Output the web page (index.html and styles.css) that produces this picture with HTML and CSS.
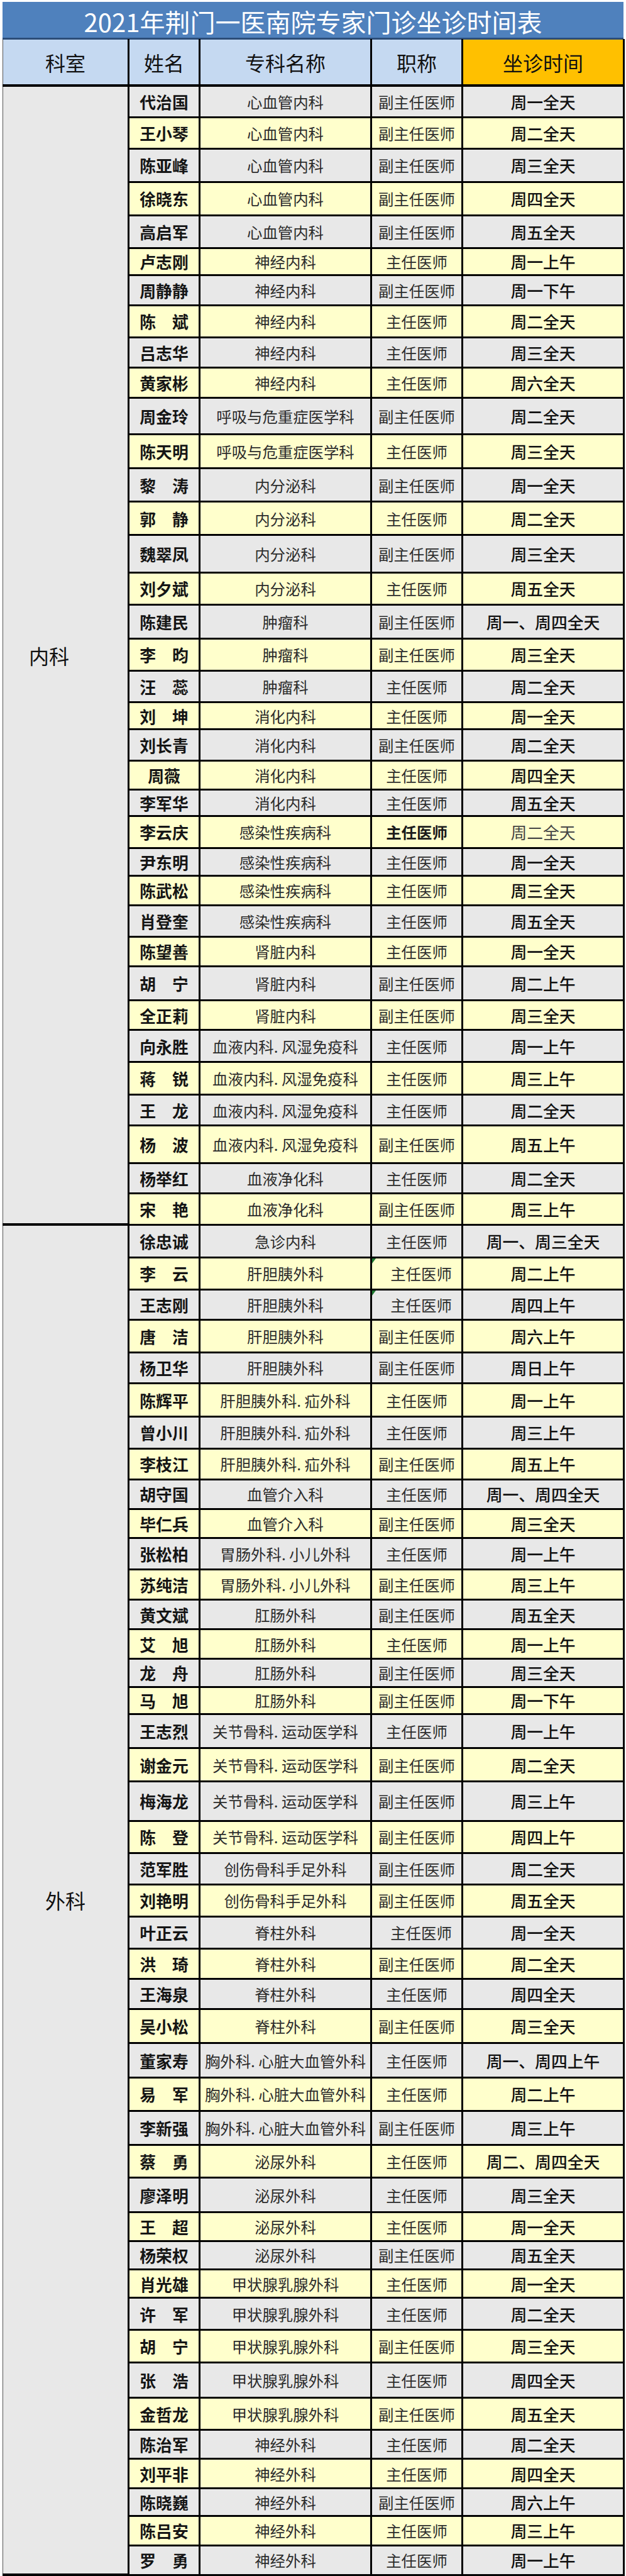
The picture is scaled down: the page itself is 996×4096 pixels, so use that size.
FILE: index.html
```html
<!DOCTYPE html>
<html lang="zh-CN">
<head>
<meta charset="utf-8">
<title>2021年荆门一医南院专家门诊坐诊时间表</title>
<link rel="stylesheet" href="styles.css">
</head>
<body>
<div class="sheet">
  <div class="title">2021年荆门一医南院专家门诊坐诊时间表</div>
  <table class="schedule">
    <colgroup>
      <col class="c-dept"><col class="c-name"><col class="c-spec"><col class="c-rank"><col class="c-time">
    </colgroup>
    <thead>
      <tr><th class="th-first">科室</th><th>姓名</th><th>专科名称</th><th>职称</th><th class="th-time">坐诊时间</th></tr>
    </thead>
    <tbody>
      <tr class="h55"><td class="dept dept-nei" rowspan="36">内科</td><td class="name">代治国</td><td class="spec">心血管内科</td><td class="rank">副主任医师</td><td class="time">周一全天</td></tr>
      <tr class="h54"><td class="name">王小琴</td><td class="spec">心血管内科</td><td class="rank">副主任医师</td><td class="time">周二全天</td></tr>
      <tr class="h57"><td class="name">陈亚峰</td><td class="spec">心血管内科</td><td class="rank">副主任医师</td><td class="time">周三全天</td></tr>
      <tr class="h58"><td class="name">徐晓东</td><td class="spec">心血管内科</td><td class="rank">副主任医师</td><td class="time">周四全天</td></tr>
      <tr class="h56"><td class="name">高启军</td><td class="spec">心血管内科</td><td class="rank">副主任医师</td><td class="time">周五全天</td></tr>
      <tr class="h47"><td class="name">卢志刚</td><td class="spec">神经内科</td><td class="rank">主任医师</td><td class="time">周一上午</td></tr>
      <tr class="h52"><td class="name">周静静</td><td class="spec">神经内科</td><td class="rank">副主任医师</td><td class="time">周一下午</td></tr>
      <tr class="h55"><td class="name">陈　斌</td><td class="spec">神经内科</td><td class="rank">主任医师</td><td class="time">周二全天</td></tr>
      <tr class="h53"><td class="name">吕志华</td><td class="spec">神经内科</td><td class="rank">主任医师</td><td class="time">周三全天</td></tr>
      <tr class="h52"><td class="name">黄家彬</td><td class="spec">神经内科</td><td class="rank">主任医师</td><td class="time">周六全天</td></tr>
      <tr class="h62"><td class="name">周金玲</td><td class="spec">呼吸与危重症医学科</td><td class="rank">副主任医师</td><td class="time">周二全天</td></tr>
      <tr class="h59"><td class="name">陈天明</td><td class="spec">呼吸与危重症医学科</td><td class="rank">主任医师</td><td class="time">周三全天</td></tr>
      <tr class="h58"><td class="name">黎　涛</td><td class="spec">内分泌科</td><td class="rank">副主任医师</td><td class="time">周一全天</td></tr>
      <tr class="h57"><td class="name">郭　静</td><td class="spec">内分泌科</td><td class="rank">主任医师</td><td class="time">周二全天</td></tr>
      <tr class="h65"><td class="name">魏翠凤</td><td class="spec">内分泌科</td><td class="rank">副主任医师</td><td class="time">周三全天</td></tr>
      <tr class="h55"><td class="name">刘夕斌</td><td class="spec">内分泌科</td><td class="rank">主任医师</td><td class="time">周五全天</td></tr>
      <tr class="h59"><td class="name">陈建民</td><td class="spec">肿瘤科</td><td class="rank">副主任医师</td><td class="time">周一、周四全天</td></tr>
      <tr class="h55"><td class="name">李　昀</td><td class="spec">肿瘤科</td><td class="rank">副主任医师</td><td class="time">周三全天</td></tr>
      <tr class="h55"><td class="name">汪　蕊</td><td class="spec">肿瘤科</td><td class="rank">主任医师</td><td class="time">周二全天</td></tr>
      <tr class="h46"><td class="name">刘　坤</td><td class="spec">消化内科</td><td class="rank">主任医师</td><td class="time">周一全天</td></tr>
      <tr class="h55"><td class="name">刘长青</td><td class="spec">消化内科</td><td class="rank">副主任医师</td><td class="time">周二全天</td></tr>
      <tr class="h49"><td class="name">周薇</td><td class="spec">消化内科</td><td class="rank">主任医师</td><td class="time">周四全天</td></tr>
      <tr class="h46"><td class="name">李军华</td><td class="spec">消化内科</td><td class="rank">主任医师</td><td class="time">周五全天</td></tr>
      <tr class="h55"><td class="name">李云庆</td><td class="spec">感染性疾病科</td><td class="rank strong">主任医师</td><td class="time light">周二全天</td></tr>
      <tr class="h48"><td class="name">尹东明</td><td class="spec">感染性疾病科</td><td class="rank">主任医师</td><td class="time">周一全天</td></tr>
      <tr class="h51"><td class="name">陈武松</td><td class="spec">感染性疾病科</td><td class="rank">主任医师</td><td class="time">周三全天</td></tr>
      <tr class="h54"><td class="name">肖登奎</td><td class="spec">感染性疾病科</td><td class="rank">主任医师</td><td class="time">周五全天</td></tr>
      <tr class="h51"><td class="name">陈望善</td><td class="spec">肾脏内科</td><td class="rank">主任医师</td><td class="time">周一全天</td></tr>
      <tr class="h59"><td class="name">胡　宁</td><td class="spec">肾脏内科</td><td class="rank">副主任医师</td><td class="time">周二上午</td></tr>
      <tr class="h51"><td class="name">全正莉</td><td class="spec">肾脏内科</td><td class="rank">副主任医师</td><td class="time">周三全天</td></tr>
      <tr class="h55"><td class="name">向永胜</td><td class="spec">血液内科. 风湿免疫科</td><td class="rank">主任医师</td><td class="time">周一上午</td></tr>
      <tr class="h57"><td class="name">蒋　锐</td><td class="spec">血液内科. 风湿免疫科</td><td class="rank">主任医师</td><td class="time">周三上午</td></tr>
      <tr class="h53"><td class="name">王　龙</td><td class="spec">血液内科. 风湿免疫科</td><td class="rank">主任医师</td><td class="time">周二全天</td></tr>
      <tr class="h65"><td class="name">杨　波</td><td class="spec">血液内科. 风湿免疫科</td><td class="rank">副主任医师</td><td class="time">周五上午</td></tr>
      <tr class="h52"><td class="name">杨举红</td><td class="spec">血液净化科</td><td class="rank">主任医师</td><td class="time">周二全天</td></tr>
      <tr class="h54"><td class="name">宋　艳</td><td class="spec">血液净化科</td><td class="rank">副主任医师</td><td class="time">周三上午</td></tr>

      <tr class="h56"><td class="dept dept-wai" rowspan="43">外科</td><td class="name">徐忠诚</td><td class="spec">急诊内科</td><td class="rank">主任医师</td><td class="time">周一、周三全天</td></tr>
      <tr class="h56"><td class="name">李　云</td><td class="spec">肝胆胰外科</td><td class="rank flag shift">主任医师</td><td class="time">周二上午</td></tr>
      <tr class="h52"><td class="name">王志刚</td><td class="spec">肝胆胰外科</td><td class="rank flag shift">主任医师</td><td class="time">周四上午</td></tr>
      <tr class="h56"><td class="name">唐　洁</td><td class="spec">肝胆胰外科</td><td class="rank">副主任医师</td><td class="time">周六上午</td></tr>
      <tr class="h54"><td class="name">杨卫华</td><td class="spec">肝胆胰外科</td><td class="rank">副主任医师</td><td class="time">周日上午</td></tr>
      <tr class="h57"><td class="name">陈辉平</td><td class="spec">肝胆胰外科. 疝外科</td><td class="rank">主任医师</td><td class="time">周一上午</td></tr>
      <tr class="h55"><td class="name">曾小川</td><td class="spec">肝胆胰外科. 疝外科</td><td class="rank">主任医师</td><td class="time">周三上午</td></tr>
      <tr class="h53"><td class="name">李枝江</td><td class="spec">肝胆胰外科. 疝外科</td><td class="rank">副主任医师</td><td class="time">周五上午</td></tr>
      <tr class="h51"><td class="name">胡守国</td><td class="spec">血管介入科</td><td class="rank">主任医师</td><td class="time">周一、周四全天</td></tr>
      <tr class="h50"><td class="name">毕仁兵</td><td class="spec">血管介入科</td><td class="rank">副主任医师</td><td class="time">周三全天</td></tr>
      <tr class="h55"><td class="name">张松柏</td><td class="spec">胃肠外科. 小儿外科</td><td class="rank">主任医师</td><td class="time">周一上午</td></tr>
      <tr class="h52"><td class="name">苏纯洁</td><td class="spec">胃肠外科. 小儿外科</td><td class="rank">副主任医师</td><td class="time">周三上午</td></tr>
      <tr class="h51"><td class="name">黄文斌</td><td class="spec">肛肠外科</td><td class="rank">副主任医师</td><td class="time">周五全天</td></tr>
      <tr class="h51"><td class="name">艾　旭</td><td class="spec">肛肠外科</td><td class="rank">主任医师</td><td class="time">周一上午</td></tr>
      <tr class="h48"><td class="name">龙　舟</td><td class="spec">肛肠外科</td><td class="rank">副主任医师</td><td class="time">周三全天</td></tr>
      <tr class="h47"><td class="name">马　旭</td><td class="spec">肛肠外科</td><td class="rank">副主任医师</td><td class="time">周一下午</td></tr>
      <tr class="h59"><td class="name">王志烈</td><td class="spec">关节骨科. 运动医学科</td><td class="rank">主任医师</td><td class="time">周一上午</td></tr>
      <tr class="h57"><td class="name">谢金元</td><td class="spec">关节骨科. 运动医学科</td><td class="rank">副主任医师</td><td class="time">周二全天</td></tr>
      <tr class="h68"><td class="name">梅海龙</td><td class="spec">关节骨科. 运动医学科</td><td class="rank">副主任医师</td><td class="time">周三上午</td></tr>
      <tr class="h56"><td class="name">陈　登</td><td class="spec">关节骨科. 运动医学科</td><td class="rank">副主任医师</td><td class="time">周四上午</td></tr>
      <tr class="h54"><td class="name">范军胜</td><td class="spec">创伤骨科手足外科</td><td class="rank">副主任医师</td><td class="time">周二全天</td></tr>
      <tr class="h55"><td class="name">刘艳明</td><td class="spec">创伤骨科手足外科</td><td class="rank">副主任医师</td><td class="time">周五全天</td></tr>
      <tr class="h56"><td class="name">叶正云</td><td class="spec">脊柱外科</td><td class="rank shift">主任医师</td><td class="time">周一全天</td></tr>
      <tr class="h52"><td class="name">洪　琦</td><td class="spec">脊柱外科</td><td class="rank">副主任医师</td><td class="time">周二全天</td></tr>
      <tr class="h52"><td class="name">王海泉</td><td class="spec">脊柱外科</td><td class="rank">主任医师</td><td class="time">周四全天</td></tr>
      <tr class="h59"><td class="name">吴小松</td><td class="spec">脊柱外科</td><td class="rank">副主任医师</td><td class="time">周三全天</td></tr>
      <tr class="h59"><td class="name">董家寿</td><td class="spec">胸外科. 心脏大血管外科</td><td class="rank">主任医师</td><td class="time">周一、周四上午</td></tr>
      <tr class="h58"><td class="name">易　军</td><td class="spec">胸外科. 心脏大血管外科</td><td class="rank">主任医师</td><td class="time">周二上午</td></tr>
      <tr class="h58"><td class="name">李新强</td><td class="spec">胸外科. 心脏大血管外科</td><td class="rank">副主任医师</td><td class="time">周三上午</td></tr>
      <tr class="h57"><td class="name">蔡　勇</td><td class="spec">泌尿外科</td><td class="rank">主任医师</td><td class="time">周二、周四全天</td></tr>
      <tr class="h59"><td class="name">廖泽明</td><td class="spec">泌尿外科</td><td class="rank">主任医师</td><td class="time">周三全天</td></tr>
      <tr class="h50"><td class="name">王　超</td><td class="spec">泌尿外科</td><td class="rank">主任医师</td><td class="time">周一全天</td></tr>
      <tr class="h49"><td class="name">杨荣权</td><td class="spec">泌尿外科</td><td class="rank">副主任医师</td><td class="time">周五全天</td></tr>
      <tr class="h49"><td class="name">肖光雄</td><td class="spec">甲状腺乳腺外科</td><td class="rank">主任医师</td><td class="time">周一全天</td></tr>
      <tr class="h55"><td class="name">许　军</td><td class="spec">甲状腺乳腺外科</td><td class="rank">主任医师</td><td class="time">周二全天</td></tr>
      <tr class="h57"><td class="name">胡　宁</td><td class="spec">甲状腺乳腺外科</td><td class="rank">副主任医师</td><td class="time">周三全天</td></tr>
      <tr class="h60"><td class="name">张　浩</td><td class="spec">甲状腺乳腺外科</td><td class="rank">主任医师</td><td class="time">周四全天</td></tr>
      <tr class="h56"><td class="name">金哲龙</td><td class="spec">甲状腺乳腺外科</td><td class="rank">副主任医师</td><td class="time">周五全天</td></tr>
      <tr class="h50"><td class="name">陈治军</td><td class="spec">神经外科</td><td class="rank">主任医师</td><td class="time">周二全天</td></tr>
      <tr class="h51"><td class="name">刘平非</td><td class="spec">神经外科</td><td class="rank">主任医师</td><td class="time">周四全天</td></tr>
      <tr class="h47"><td class="name">陈晓巍</td><td class="spec">神经外科</td><td class="rank">副主任医师</td><td class="time">周六上午</td></tr>
      <tr class="h51"><td class="name">陈吕安</td><td class="spec">神经外科</td><td class="rank">主任医师</td><td class="time">周三上午</td></tr>
      <tr class="h51"><td class="name">罗　勇</td><td class="spec">神经外科</td><td class="rank">主任医师</td><td class="time">周一上午</td></tr>
    </tbody>
  </table>
</div>
</body>
</html>
```

FILE: styles.css
```css
html, body {
  margin: 0;
  padding: 0;
  background: #ffffff;
}

body {
  font-family: "Noto Sans CJK SC", "Noto Sans", "Liberation Sans", sans-serif;
  color: #111111;
}

.sheet {
  width: 988px;
  margin: 3px 0 0 4px;
}

.title {
  box-sizing: border-box;
  height: 59px;
  padding-top: 6px;
  background: #4f81bd;
  border-bottom: 2px solid #2c4d78;
  color: #ffffff;
  font-size: 40px;
  line-height: 51px;
  text-align: center;
  white-space: nowrap;
}

.schedule {
  width: 988px;
  border-collapse: collapse;
  table-layout: fixed;
}

.c-dept { width: 200px; }
.c-name { width: 113px; }
.c-spec { width: 273px; }
.c-rank { width: 145px; }
.c-time { width: 257px; }

.schedule th {
  height: 71px;
  padding: 0;
  background: #c5d9f1;
  border-left: 3px solid #000000;
  border-right: 3px solid #000000;
  border-top: 1px solid #2c4d78;
  border-bottom: 4px solid #000000;
  font-size: 32px;
  font-weight: 400;
  color: #111111;
  text-align: center;
  vertical-align: middle;
  white-space: nowrap;
}

.schedule th.th-first {
  border-left: 1px solid #555555;
}

.schedule th.th-time {
  background: #ffc000;
}

.schedule td {
  padding: 0;
  border: 3px solid #000000;
  text-align: center;
  vertical-align: middle;
  white-space: nowrap;
}

.schedule tbody tr:nth-child(odd) > td {
  background: #e8e8e8;
}

.schedule tbody tr:nth-child(even) > td {
  background: #ffffcc;
}

.schedule td.dept {
  background: #c5d9f1;
  border-left: 1px solid #555555;
  border-bottom: 4px solid #000000;
  font-size: 32px;
  font-weight: 400;
  color: #111111;
}

.schedule td.dept-nei {
  padding-right: 52px;
}

.name {
  font-size: 25.8px;
  font-weight: 700;
  color: #151515;
}

.spec {
  font-size: 24.4px;
  font-weight: 400;
  color: #2c2c2c;
}

.rank {
  font-size: 24.4px;
  font-weight: 400;
  color: #2c2c2c;
}

.rank.strong {
  font-weight: 700;
  color: #1a1a1a;
}

.rank.shift {
  padding-left: 14px;
}

.rank.flag {
  position: relative;
}

.rank.flag::before {
  content: "";
  position: absolute;
  top: 0;
  left: 0;
  border-top: 8px solid #1f7a32;
  border-right: 6px solid transparent;
}

.time {
  font-size: 25.8px;
  font-weight: 500;
  color: #111111;
}

.time.light {
  font-weight: 400;
  color: #444444;
}

.h46 { height: 42.4px; }
.h47 { height: 43.3px; }
.h48 { height: 44.3px; }
.h49 { height: 45.2px; }
.h50 { height: 46.1px; }
.h51 { height: 47.0px; }
.h52 { height: 47.9px; }
.h53 { height: 48.9px; }
.h54 { height: 49.8px; }
.h55 { height: 50.7px; }
.h56 { height: 51.6px; }
.h57 { height: 52.6px; }
.h58 { height: 53.5px; }
.h59 { height: 54.4px; }
.h60 { height: 55.3px; }
.h62 { height: 57.2px; }
.h65 { height: 59.9px; }
.h68 { height: 62.7px; }
```
